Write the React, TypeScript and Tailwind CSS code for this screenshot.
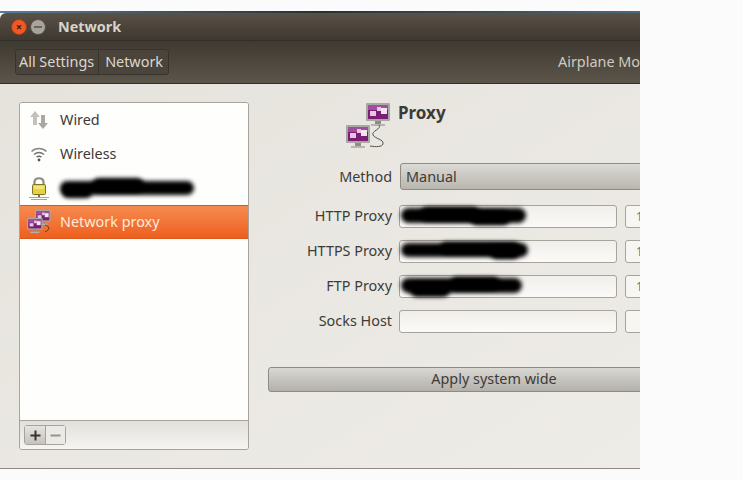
import React from "react";

const font = { fontFamily: '"Noto Sans", "Open Sans", sans-serif' };

function Monitor({ x, y, s = 1 }: { x: number; y: number; s?: number }) {
  return (
    <g transform={`translate(${x} ${y}) scale(${s})`}>
      <rect x="0" y="0" width="24" height="18" rx="1" fill="#a9a8a2" />
      <rect x="2" y="2" width="20" height="14" fill="#7a1f73" />
      <rect x="2" y="2" width="20" height="5" fill="#a0509a" />
      <rect x="4" y="8" width="6" height="5" fill="#e6c6e2" />
      <rect x="11" y="4" width="4" height="4" fill="#e6c6e2" />
      <rect x="15" y="5" width="6" height="6" fill="#f3e4f1" />
      <rect x="9" y="18" width="6" height="3" fill="#8d8c86" />
      <rect x="5" y="21" width="14" height="2" fill="#b5b4ae" />
    </g>
  );
}

function ProxyIcon() {
  return (
    <svg width="46" height="46" viewBox="0 0 46 46" className="block">
      <Monitor x={20} y={0} />
      <Monitor x={0} y={22} />
      <path d="M33 22 C36 26 25 28 27 32 C29 36 38 36 37 41 C36 44 30 44 24 43" fill="none" stroke="#55504a" strokeWidth="1" />
    </svg>
  );
}

function SmallProxyIcon() {
  return (
    <svg width="24" height="24" viewBox="0 0 24 24" className="block">
      <g transform="translate(8 0) scale(.65)"><Monitor x={0} y={0} /></g>
      <g transform="translate(0 8) scale(.65)"><Monitor x={0} y={0} /></g>
      <path d="M18 15 C23 16 23 20 18 22" fill="none" stroke="#5a3a28" strokeWidth="1" />
    </svg>
  );
}

function WiredIcon() {
  return (
    <svg width="20" height="20" viewBox="0 0 20 20" className="block">
      <path d="M6 1 L11 7 H8 V15 H4 V7 H1 Z" fill="#c3c1ba" />
      <path d="M14 19 L19 13 H16 V5 H12 V13 H9 Z" fill="#a9a79f" />
    </svg>
  );
}

function WifiIcon() {
  return (
    <svg width="18" height="18" viewBox="0 0 18 18" className="block">
      <path d="M1.5 6.5 C5.5 2.5 12.5 2.5 16.5 6.5" fill="none" stroke="#8a8882" strokeWidth="1.5" />
      <path d="M4 9.5 C7 7 11 7 14 9.5" fill="none" stroke="#77756f" strokeWidth="1.5" />
      <path d="M6.5 12 C8 11 10 11 11.5 12" fill="none" stroke="#66645f" strokeWidth="1.5" />
      <circle cx="9" cy="15" r="1.4" fill="#55534e" />
    </svg>
  );
}

function LockIcon() {
  return (
    <svg width="20" height="24" viewBox="0 0 20 24" className="block">
      <path d="M5.5 10 V6 C5.5 1 14.5 1 14.5 6 V10" fill="none" stroke="#8c8a80" strokeWidth="2.2" />
      <rect x="3.5" y="8.5" width="13" height="10" rx="1" fill="#e4d23f" stroke="#7f7420" />
      <rect x="5" y="10" width="10" height="3" fill="#f1e67a" />
      <rect x="9" y="19" width="2" height="3" fill="#77756f" />
      <path d="M0 21.5 H20 M2 23.5 H18" stroke="#a5a39c" strokeWidth="1" />
    </svg>
  );
}

function Blob({ className }: { className: string }) {
  return <span className={`absolute bg-black rounded-full blur-[2px] ${className}`} />;
}

function Row({ label, blobs, port = true }: { label: string; blobs?: string[]; port?: boolean }) {
  return (
    <div className="flex items-center h-[23px]">
      <span className="w-[131px] pr-[7px] pb-[2px] text-right text-[14.4px] text-[#3c3b37] shrink-0">{label}</span>
      <div className="relative w-[218px] h-[23px] shrink-0 rounded-[3px] border border-[#a8a49c] bg-gradient-to-b from-[#f1efeb] to-[#fbfaf8]">
        {blobs?.map((b) => <Blob key={b} className={b} />)}
      </div>
      <div className="ml-[8px] w-[40px] h-[23px] shrink-0 rounded-[3px] border border-[#a8a49c] bg-[#f7f6f3] pl-[10px] text-[12px] leading-[21px] text-[#77756f]">
        {port ? "1" : ""}
      </div>
    </div>
  );
}

function Item({ icon, children, selected }: { icon: React.ReactNode; children: React.ReactNode; selected?: boolean }) {
  return (
    <div
      className={`flex items-center h-[34px] pb-[1px] text-[14.4px] ${
        selected
          ? "bg-gradient-to-b from-[#f58a4e] to-[#ee5f1c] border-y border-[#d9591f] text-[#fdeadd]"
          : "text-[#3c3b37]"
      }`}
    >
      <span className="w-[40px] flex justify-center shrink-0 pr-[3px]">{icon}</span>
      {children}
    </div>
  );
}

export default function App() {
  return (
    <div className="w-[743px] h-[480px] bg-[#fbfbfb] overflow-hidden" style={font}>
      <div className="w-[640px] h-[469px] flex flex-col overflow-hidden">
        <div className="h-[13px] shrink-0 flex flex-col justify-end">
          <div className="h-[2px] bg-gradient-to-r from-[#5a7d9a] via-[#2b2f33] to-[#4a6a80]" />
        </div>
        <div className="h-[28px] shrink-0 flex items-center pl-[11px] bg-gradient-to-b from-[#5a5147] to-[#3e3830] rounded-tl-[6px] border-b border-[#332e27]">
          <span className="w-[16px] h-[16px] rounded-full bg-[#ee5a25] border border-[#a83c14] flex items-center justify-center text-[11px] leading-none text-[#4a1a08] font-bold">
            ×
          </span>
          <span className="ml-[3px] w-[16px] h-[16px] rounded-full bg-[#a8a49c] border border-[#56524b] flex items-center justify-center">
            <span className="w-[8px] h-[2px] bg-[#6a665f]" />
          </span>
          <span className="ml-[12px] text-[14.4px] font-bold text-[#d8d3ca]">Network</span>
        </div>
        <div className="h-[43px] shrink-0 flex items-center justify-between pl-[15px] bg-gradient-to-b from-[#3f3a32] to-[#5c554a] border-b border-[#332e27]">
          <div className="flex h-[26px] rounded-[3px] border border-[#37332d] bg-[#4a443b] text-[14.4px] text-[#dcd8d0]">
            <span className="pl-[3px] pr-[4px] leading-[24px] border-r border-[#37332d]">All Settings</span>
            <span className="pl-[6px] pr-[5px] leading-[24px]">Network</span>
          </div>
          <span className="text-[14.4px] text-[#cfcbc3] whitespace-nowrap w-[82px] overflow-hidden">Airplane Mode</span>
        </div>
        <div className="flex-1 min-h-0 flex bg-gradient-to-br from-[#e6e3dd] to-[#eeece7] border-b border-[#8f8b84] pt-[18px] pl-[19px]">
          <div className="w-[230px] h-[348px] shrink-0 flex flex-col rounded-[3px] border border-[#a8a49c] overflow-hidden">
            <div className="flex-1 bg-[#fefefd]">
              <Item icon={<WiredIcon />}>Wired</Item>
              <Item icon={<WifiIcon />}>Wireless</Item>
              <Item icon={<LockIcon />}>
                <span className="relative w-[134px] h-[20px] block">
                  <Blob className="left-0 top-[3px] w-[134px] h-[14px]" />
                  <Blob className="left-[32px] top-0 w-[52px] h-[14px]" />
                  <Blob className="left-[2px] top-[8px] w-[30px] h-[12px]" />
                </span>
              </Item>
              <Item icon={<SmallProxyIcon />} selected>Network proxy</Item>
            </div>
            <div className="h-[29px] shrink-0 border-t border-[#a8a49c] bg-gradient-to-b from-[#e2e0db] to-[#f6f5f2] flex items-center pl-[4px]">
              <div className="flex h-[20px] rounded-[3px] border border-[#a8a49c]">
                <span className="w-[21px] flex items-center justify-center bg-gradient-to-b from-[#e6e4df] to-[#c6c3bd] border-r border-[#a8a49c]">
                  <svg width="11" height="11" viewBox="0 0 11 11"><path d="M5.5 0.5V10.5M0.5 5.5H10.5" stroke="#35332f" strokeWidth="2" /></svg>
                </span>
                <span className="w-[19px] flex items-center justify-center bg-[#eceae6]">
                  <svg width="11" height="11" viewBox="0 0 11 11"><path d="M0.5 5.5H10.5" stroke="#95938d" strokeWidth="2" /></svg>
                </span>
              </div>
            </div>
          </div>
          <div className="flex-1 min-w-0 pl-[19px] overflow-hidden">
            <div className="flex h-[61px] pl-[78px] pt-[1px]">
              <ProxyIcon />
              <span className="ml-[6px] text-[17px] font-bold leading-[20px] text-[#3c3b37]">Proxy</span>
            </div>
            <div className="flex items-center h-[27px]">
              <span className="w-[131px] pr-[7px] text-right text-[14.4px] text-[#3c3b37] shrink-0">Method</span>
              <div className="ml-[1px] w-[300px] h-[27px] shrink-0 rounded-[3px] border border-[#8f8b84] bg-gradient-to-b from-[#dcdad5] to-[#b9b6b0] pl-[5px] text-[14.4px] leading-[25px] text-[#3c3b37]">
                Manual
              </div>
            </div>
            <div className="mt-[15px] flex flex-col gap-[12px]">
              <Row label="HTTP Proxy" blobs={["left-[1px] top-[2px] w-[125px] h-[15px]", "left-[20px] top-[1px] w-[60px] h-[14px]", "left-[70px] top-[5px] w-[40px] h-[14px]"]} />
              <Row label="HTTPS Proxy" blobs={["left-[1px] top-[2px] w-[127px] h-[14px]", "left-[40px] top-[1px] w-[80px] h-[12px]", "left-[90px] top-[5px] w-[30px] h-[13px]"]} />
              <Row label="FTP Proxy" blobs={["left-[1px] top-[2px] w-[121px] h-[15px]", "left-[10px] top-[7px] w-[40px] h-[14px]", "left-[50px] top-[1px] w-[50px] h-[13px]"]} />
              <Row label="Socks Host" port={false} />
            </div>
            <div className="mt-[34px] w-[452px] h-[25px] rounded-[3px] border border-[#8f8b84] bg-gradient-to-b from-[#dad8d3] to-[#b3b0aa] text-center text-[14.4px] leading-[22px] text-[#3c3b37]">
              Apply system wide
            </div>
          </div>
        </div>
      </div>
    </div>
  );
}
